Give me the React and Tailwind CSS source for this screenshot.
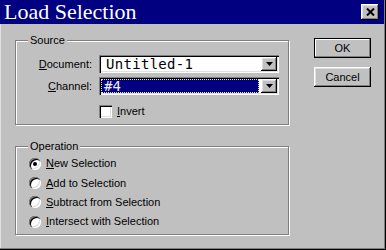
import React from "react";

// Win95-style "Load Selection" dialog
const sunken =
  "shadow-[inset_1px_1px_0_#808080,inset_2px_2px_0_#000,inset_-1px_-1px_0_#fff,inset_-2px_-2px_0_#dfdfdf]";
const raised =
  "shadow-[inset_-1px_-1px_0_#000,inset_1px_1px_0_#fff,inset_-2px_-2px_0_#808080,inset_2px_2px_0_#dfdfdf]";
const etched = "border border-[#808080] shadow-[inset_1px_1px_0_#fff,1px_1px_0_#fff]";

function Arrow() {
  return (
    <div className={`flex w-[16px] items-center justify-center bg-[#c0c0c0] ${raised}`}>
      <svg width="7" height="4" viewBox="0 0 7 4">
        <path d="M0 0h7L3.5 4z" fill="#000" />
      </svg>
    </div>
  );
}

function Combo({ value, selected }) {
  return (
    <div className={`flex h-[18px] w-[180px] bg-white p-[2px] ${sunken}`}>
      <div className="flex flex-1 items-center pr-[2px]">
        {selected ? (
          <div className="flex h-[14px] flex-1 items-center bg-[#000080] pl-[3px] text-[#f0f0f0] outline-1 outline-dotted outline-[#e8e8a0] -outline-offset-1">
            {value}
          </div>
        ) : (
          <div className="flex h-[14px] flex-1 items-center pl-[5px] tracking-[0.3px] text-black">{value}</div>
        )}
      </div>
      <Arrow />
    </div>
  );
}

function Radio({ checked, children }) {
  return (
    <div className="flex h-[19.3px] items-center gap-[5px]">
      <div className={`flex h-[12px] w-[12px] items-center justify-center rounded-full bg-white ${sunken}`}>
        {checked && <div className="h-[4px] w-[4px] rounded-full bg-black" />}
      </div>
      <span>{children}</span>
    </div>
  );
}

function Group({ label, className, children }) {
  return (
    <div className={`relative ${etched} ${className}`}>
      <span className="absolute -top-[8px] left-[12px] bg-[#c0c0c0] px-[2px] leading-[14px]">{label}</span>
      {children}
    </div>
  );
}

function Button({ children, isDefault }) {
  return (
    <div
      className={`flex h-[20px] w-[57px] items-center justify-center bg-[#c0c0c0] ${
        isDefault
          ? "border border-black shadow-[inset_-1px_-1px_0_#808080,inset_1px_1px_0_#fff]"
          : raised
      }`}
    >
      {children}
    </div>
  );
}

export default function App() {
  const mono = { fontFamily: '"DejaVu Sans Mono", "Liberation Mono", monospace' };
  return (
    <div
      className="flex h-[250px] w-[386px] flex-col bg-[#c0c0c0] text-[11px] text-black shadow-[inset_-1px_-1px_0_#000,inset_-2px_-2px_0_#808080,inset_1px_0_0_#dfdfdf]"
      style={{ fontFamily: '"Liberation Sans", Arial, sans-serif' }}
    >
      {/* Title bar */}
      <div className="mr-[2px] flex h-[24px] items-center justify-between bg-[#000080] pl-[4px] pr-[5px]">
        <span
          className="text-[22px] leading-[24px] text-white"
          style={{ fontFamily: '"Liberation Serif", "Times New Roman", serif' }}
        >
          Load Selection
        </span>
        <div className={`flex h-[16px] w-[18px] items-center justify-center bg-[#c0c0c0] ${raised}`}>
          <svg width="9" height="8" viewBox="0 0 9 8">
            <path d="M1 0.5l7 7M8 0.5l-7 7" stroke="#000" strokeWidth="2" />
          </svg>
        </div>
      </div>

      {/* Body */}
      <div className="flex pl-[15px] pt-[14px]">
        <div className="flex w-[274px] flex-col gap-[21px] pt-[2px]">
          <Group label="Source" className="h-[85px] pt-[14px]">
            <div className="flex flex-col gap-[4px]">
              <div className="flex items-center">
                <span className="w-[76px] text-right"><u>D</u>ocument:</span>
                <div className="ml-[7px] text-[14px]" style={mono}>
                  <Combo value="Untitled-1" />
                </div>
              </div>
              <div className="flex items-center">
                <span className="w-[76px] text-right"><u>C</u>hannel:</span>
                <div className="ml-[7px] text-[14px]" style={mono}>
                  <Combo value="#4" selected />
                </div>
              </div>
            </div>
            <div className="ml-[83px] mt-[8px] flex items-center gap-[5px]">
              <div className={`h-[13px] w-[13px] bg-white ${sunken}`} />
              <span><u>I</u>nvert</span>
            </div>
          </Group>

          <Group label="Operation" className="h-[89px] pl-[13px] pt-[7px]">
            <Radio checked><u>N</u>ew Selection</Radio>
            <Radio><u>A</u>dd to Selection</Radio>
            <Radio><u>S</u>ubtract from Selection</Radio>
            <Radio><u>I</u>ntersect with Selection</Radio>
          </Group>
        </div>

        <div className="ml-[25px] flex flex-col gap-[9px]">
          <Button isDefault>OK</Button>
          <Button>Cancel</Button>
        </div>
      </div>
    </div>
  );
}
